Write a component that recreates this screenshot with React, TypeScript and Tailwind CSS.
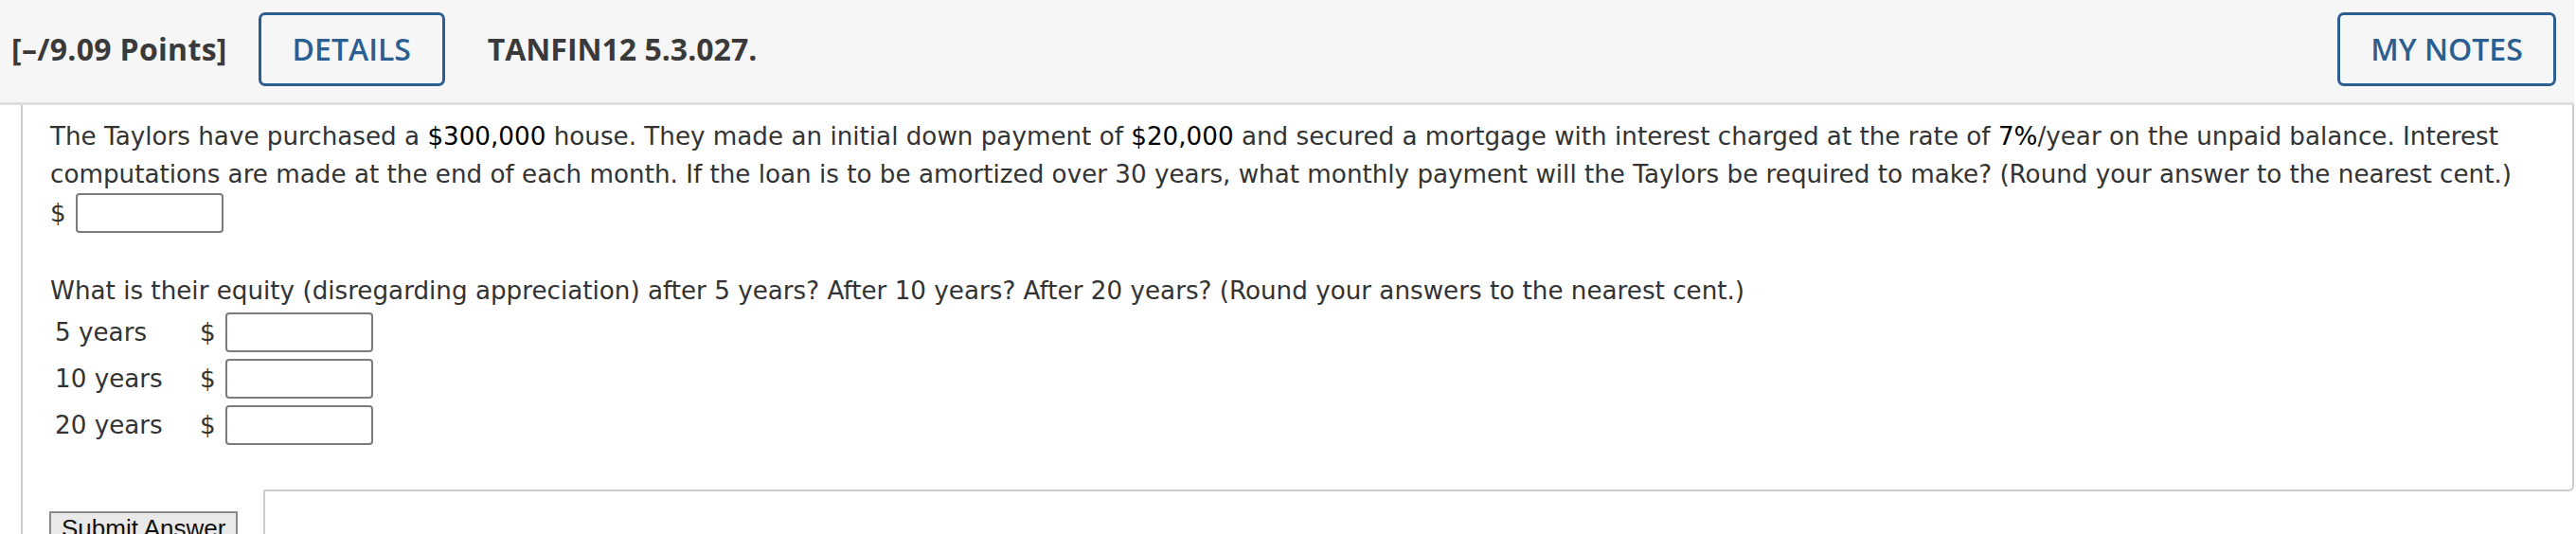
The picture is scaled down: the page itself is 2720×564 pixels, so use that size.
import type { ReactNode } from 'react';

const BODY_FONT = "font-['DejaVu_Sans',Verdana,sans-serif]";

function Num({ children }: { children: ReactNode }) {
  return <span className="text-black">{children}</span>;
}

function AnswerBox() {
  return <div className="h-[42px] w-[156px] rounded-[4px] border-2 border-[#7c7c7c] bg-white" />;
}

function OutlineButton({ label, width }: { label: string; width: string }) {
  return (
    <div
      className={`${width} flex h-[78px] items-center justify-center rounded-[7px] border-[3px] border-[#2b5f91] text-[32px] font-semibold text-[#2b5f91]`}
    >
      {label}
    </div>
  );
}

const equityRows = ['5 years', '10 years', '20 years'];

export default function App() {
  return (
    <div className="h-[564px] w-[2720px] overflow-hidden bg-white">
      <header className="flex h-[111px] w-[2718px] items-center border-b-[3px] border-[#dedede] bg-[#f6f6f6] pb-[4px] pl-[12px] pr-[19px] font-['Open_Sans',sans-serif] text-[32px] text-[#3a3a3a]">
        <span className="font-bold tracking-[0.3px]">[–/9.09 Points]</span>
        <div className="ml-[33px]">
          <OutlineButton label="DETAILS" width="w-[197px]" />
        </div>
        <span className="ml-[45px] font-bold">TANFIN12 5.3.027.</span>
        <div className="ml-auto">
          <OutlineButton label="MY NOTES" width="w-[231px]" />
        </div>
      </header>

      <div className={`ml-[22px] w-[2696px] border-l-2 border-[#cccccc] ${BODY_FONT} text-[26.2px] leading-[40px] text-[#333333]`}>
        <div className="rounded-br-[6px] border-r-2 border-b-2 border-[#cccccc] pb-[47px] pl-[29px] pr-[30px] pt-[13px]">
          <p>
            The Taylors have purchased a <Num>$300,000</Num> house. They made an initial down payment of{' '}
            <Num>$20,000</Num> and secured a mortgage with interest charged at the rate of <Num>7%</Num>/year on
            the unpaid balance. Interest computations are made at the end of each month. If the loan is to be
            amortized over 30 years, what monthly payment will the Taylors be required to make? (Round your answer
            to the nearest cent.)
          </p>
          <div className="flex h-[42px] items-center gap-[10px]">
            <span>$</span>
            <AnswerBox />
          </div>

          <p className="mt-[41px]">
            What is their equity (disregarding appreciation) after 5 years? After 10 years? After 20 years? (Round
            your answers to the nearest cent.)
          </p>
          <div className="mt-[3px] flex flex-col gap-[7px]">
            {equityRows.map((label) => (
              <div key={label} className="flex h-[42px] items-center">
                <span className="w-[158px] pl-[5px]">{label}</span>
                <span className="w-[27px]">$</span>
                <AnswerBox />
              </div>
            ))}
          </div>
        </div>

        <div className="-mt-[2px] flex h-[48px]">
          <div className="w-[254px] bg-white pl-[28px] pt-[23px]">
            <button className="block w-[199px] border-2 border-[#8a8a8a] bg-[#e9e9e9] py-[1px] pl-[11px] text-left font-['Liberation_Sans',Arial,sans-serif] text-[26px] leading-[30px] text-[#111]">
              Submit Answer
            </button>
          </div>
          <div className="flex-1 border-l-2 border-[#cccccc]" />
        </div>
      </div>
    </div>
  );
}
